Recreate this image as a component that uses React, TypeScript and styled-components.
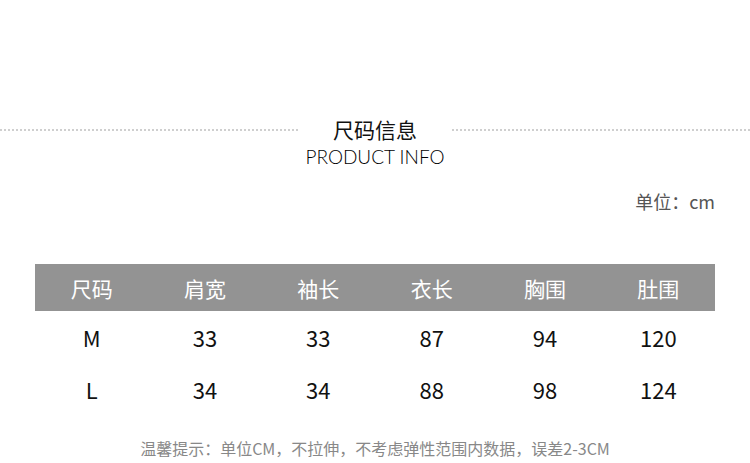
import React from 'react';
import styled, { createGlobalStyle } from 'styled-components';

const GlobalStyle = createGlobalStyle`
  html, body {
    margin: 0;
    padding: 0;
    background: #fff;
  }
  body {
    font-family: "Noto Sans CJK SC", "Noto Sans", sans-serif;
  }
`;

const headers = ['尺码', '肩宽', '袖长', '衣长', '胸围', '肚围'];
const rows = [
  ['M', '33', '33', '87', '94', '120'],
  ['L', '34', '34', '88', '98', '124'],
];

const App: React.FC = () => {
  return (
    <Page>
      <GlobalStyle />
      <TitleBlock>
        <TitleRow>
          <DotLine />
          <Title>尺码信息</Title>
          <DotLine />
        </TitleRow>
        <Subtitle>PRODUCT INFO</Subtitle>
      </TitleBlock>
      <Unit>单位：cm</Unit>
      <Table>
        <HeaderRow>
          {headers.map((h) => (
            <HeadCell key={h}>{h}</HeadCell>
          ))}
        </HeaderRow>
        {rows.map((r) => (
          <Row key={r[0]}>
            {r.map((v, i) => (
              <Cell key={i}>{v}</Cell>
            ))}
          </Row>
        ))}
      </Table>
      <Note>温馨提示：单位CM，不拉伸，不考虑弹性范围内数据，误差2-3CM</Note>
    </Page>
  );
};

const Page = styled.div`
  width: 750px;
  height: 463px;
  overflow: hidden;
  padding-top: 114px;
  box-sizing: border-box;
`;

const TitleBlock = styled.div`
  display: flex;
  flex-direction: column;
  align-items: center;
`;

const TitleRow = styled.div`
  width: 100%;
  display: flex;
  align-items: center;
`;

const DotLine = styled.div`
  flex: 1;
  border-top: 2px dotted #cfcfcf;
  margin-top: 1px;
`;

const Title = styled.div`
  width: 154px;
  text-align: center;
  font-size: 21px;
  line-height: 30px;
  color: #111;
`;

const Subtitle = styled.div`
  font-family: Lato, "Liberation Sans", sans-serif;
  font-weight: 300;
  font-size: 19px;
  line-height: 24px;
  color: #000;
  margin-top: 1px;
`;

const Unit = styled.div`
  text-align: right;
  padding-right: 35px;
  margin-top: 19px;
  font-size: 18px;
  line-height: 26px;
  color: #555;
`;

const Table = styled.div`
  margin: 50px 35px 0;
  display: flex;
  flex-direction: column;
`;

const HeaderRow = styled.div`
  display: grid;
  grid-template-columns: repeat(6, 1fr);
  height: 47px;
  background: #939393;
  align-items: center;
`;

const HeadCell = styled.div`
  text-align: center;
  color: #fff;
  font-size: 21px;
`;

const Row = styled.div`
  display: grid;
  grid-template-columns: repeat(6, 1fr);
  height: 52px;
  align-items: center;
`;

const Cell = styled.div`
  text-align: center;
  color: #111;
  font-size: 22px;
`;

const Note = styled.div`
  margin-top: 22px;
  text-align: center;
  font-size: 16px;
  line-height: 22px;
  color: #888;
`;

export default App;
